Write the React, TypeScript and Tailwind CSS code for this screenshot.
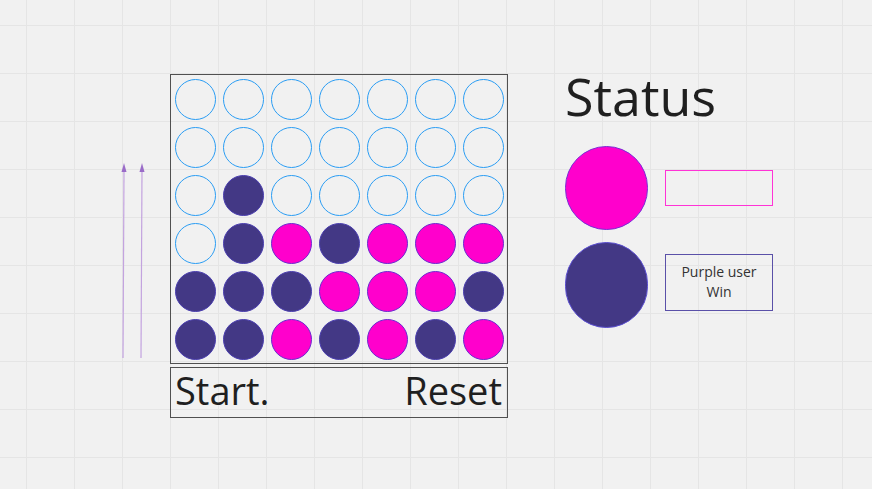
type Cell = "e" | "p" | "m";

const board: Cell[][] = [
  ["e", "e", "e", "e", "e", "e", "e"],
  ["e", "e", "e", "e", "e", "e", "e"],
  ["e", "p", "e", "e", "e", "e", "e"],
  ["e", "p", "m", "p", "m", "m", "m"],
  ["p", "p", "p", "m", "m", "m", "p"],
  ["p", "p", "m", "p", "m", "p", "m"],
];

const discClass: Record<Cell, string> = {
  e: "border-[#2a9df4] bg-transparent",
  p: "border-[#4b3fb0] bg-[#433885]",
  m: "border-[#6a2bd0] bg-[#ff00cc]",
};

function Arrows() {
  return (
    <svg width="30" height="200" viewBox="0 0 30 200" className="mt-[88px] shrink-0">
      {[4, 22].map((x) => (
        <g key={x}>
          <line x1={x} y1="8" x2={x - 1} y2="196" stroke="#c3a3df" strokeWidth="1.2" />
          <path d={`M${x - 2.5} 10 L${x} 1 L${x + 2.5} 10 Z`} fill="#9a6cc8" />
        </g>
      ))}
    </svg>
  );
}

export default function App() {
  return (
    <div
      className="w-[872px] h-[489px] overflow-hidden bg-[#f1f1f1] bg-[linear-gradient(to_right,#e5e5e5_1px,transparent_1px),linear-gradient(to_bottom,#e5e5e5_1px,transparent_1px)] bg-[size:48px_48px] bg-[position:26px_25px] font-['Open_Sans',sans-serif] text-[#1f1f1f]"
    >
      <div className="flex items-start pl-[120px] pt-[74px]">
        <Arrows />

        {/* board + controls */}
        <div className="ml-[20px] flex w-[338px] flex-col gap-[3px]">
          <div className="grid grid-cols-7 border border-[#505050]">
            {board.flat().map((c, i) => (
              <div key={i} className="flex h-[48px] items-center justify-center">
                <div className={`h-[41px] w-[41px] rounded-full border ${discClass[c]}`} />
              </div>
            ))}
          </div>
          <div className="flex h-[51px] items-center justify-between border border-[#505050] pb-[6px] pl-[4px] pr-[5px] text-[38px] leading-none">
            <span>Start.</span>
            <span>Reset</span>
          </div>
        </div>

        {/* status */}
        <div className="ml-[57px] flex flex-col">
          <h1 className="-mt-[5px] text-[52px] leading-[54px]">Status</h1>
          <div className="mt-[23px] flex flex-col gap-[12px]">
            <div className="flex items-center gap-[17px]">
              <div className="h-[84px] w-[83px] rounded-full border border-[#7a2bd6] bg-[#ff00cc]" />
              <div className="h-[36px] w-[108px] border-[1.5px] border-[#ff33d6]" />
            </div>
            <div className="flex items-center gap-[17px]">
              <div className="h-[86px] w-[83px] rounded-full border border-[#5a4ed0] bg-[#433885]" />
              <div className="-mt-[6px] flex h-[57px] w-[108px] flex-col items-center justify-center border border-[#5a50a8] text-[14px] leading-[20px] text-[#333]">
                <span>Purple user</span>
                <span>Win</span>
              </div>
            </div>
          </div>
        </div>
      </div>
    </div>
  );
}
